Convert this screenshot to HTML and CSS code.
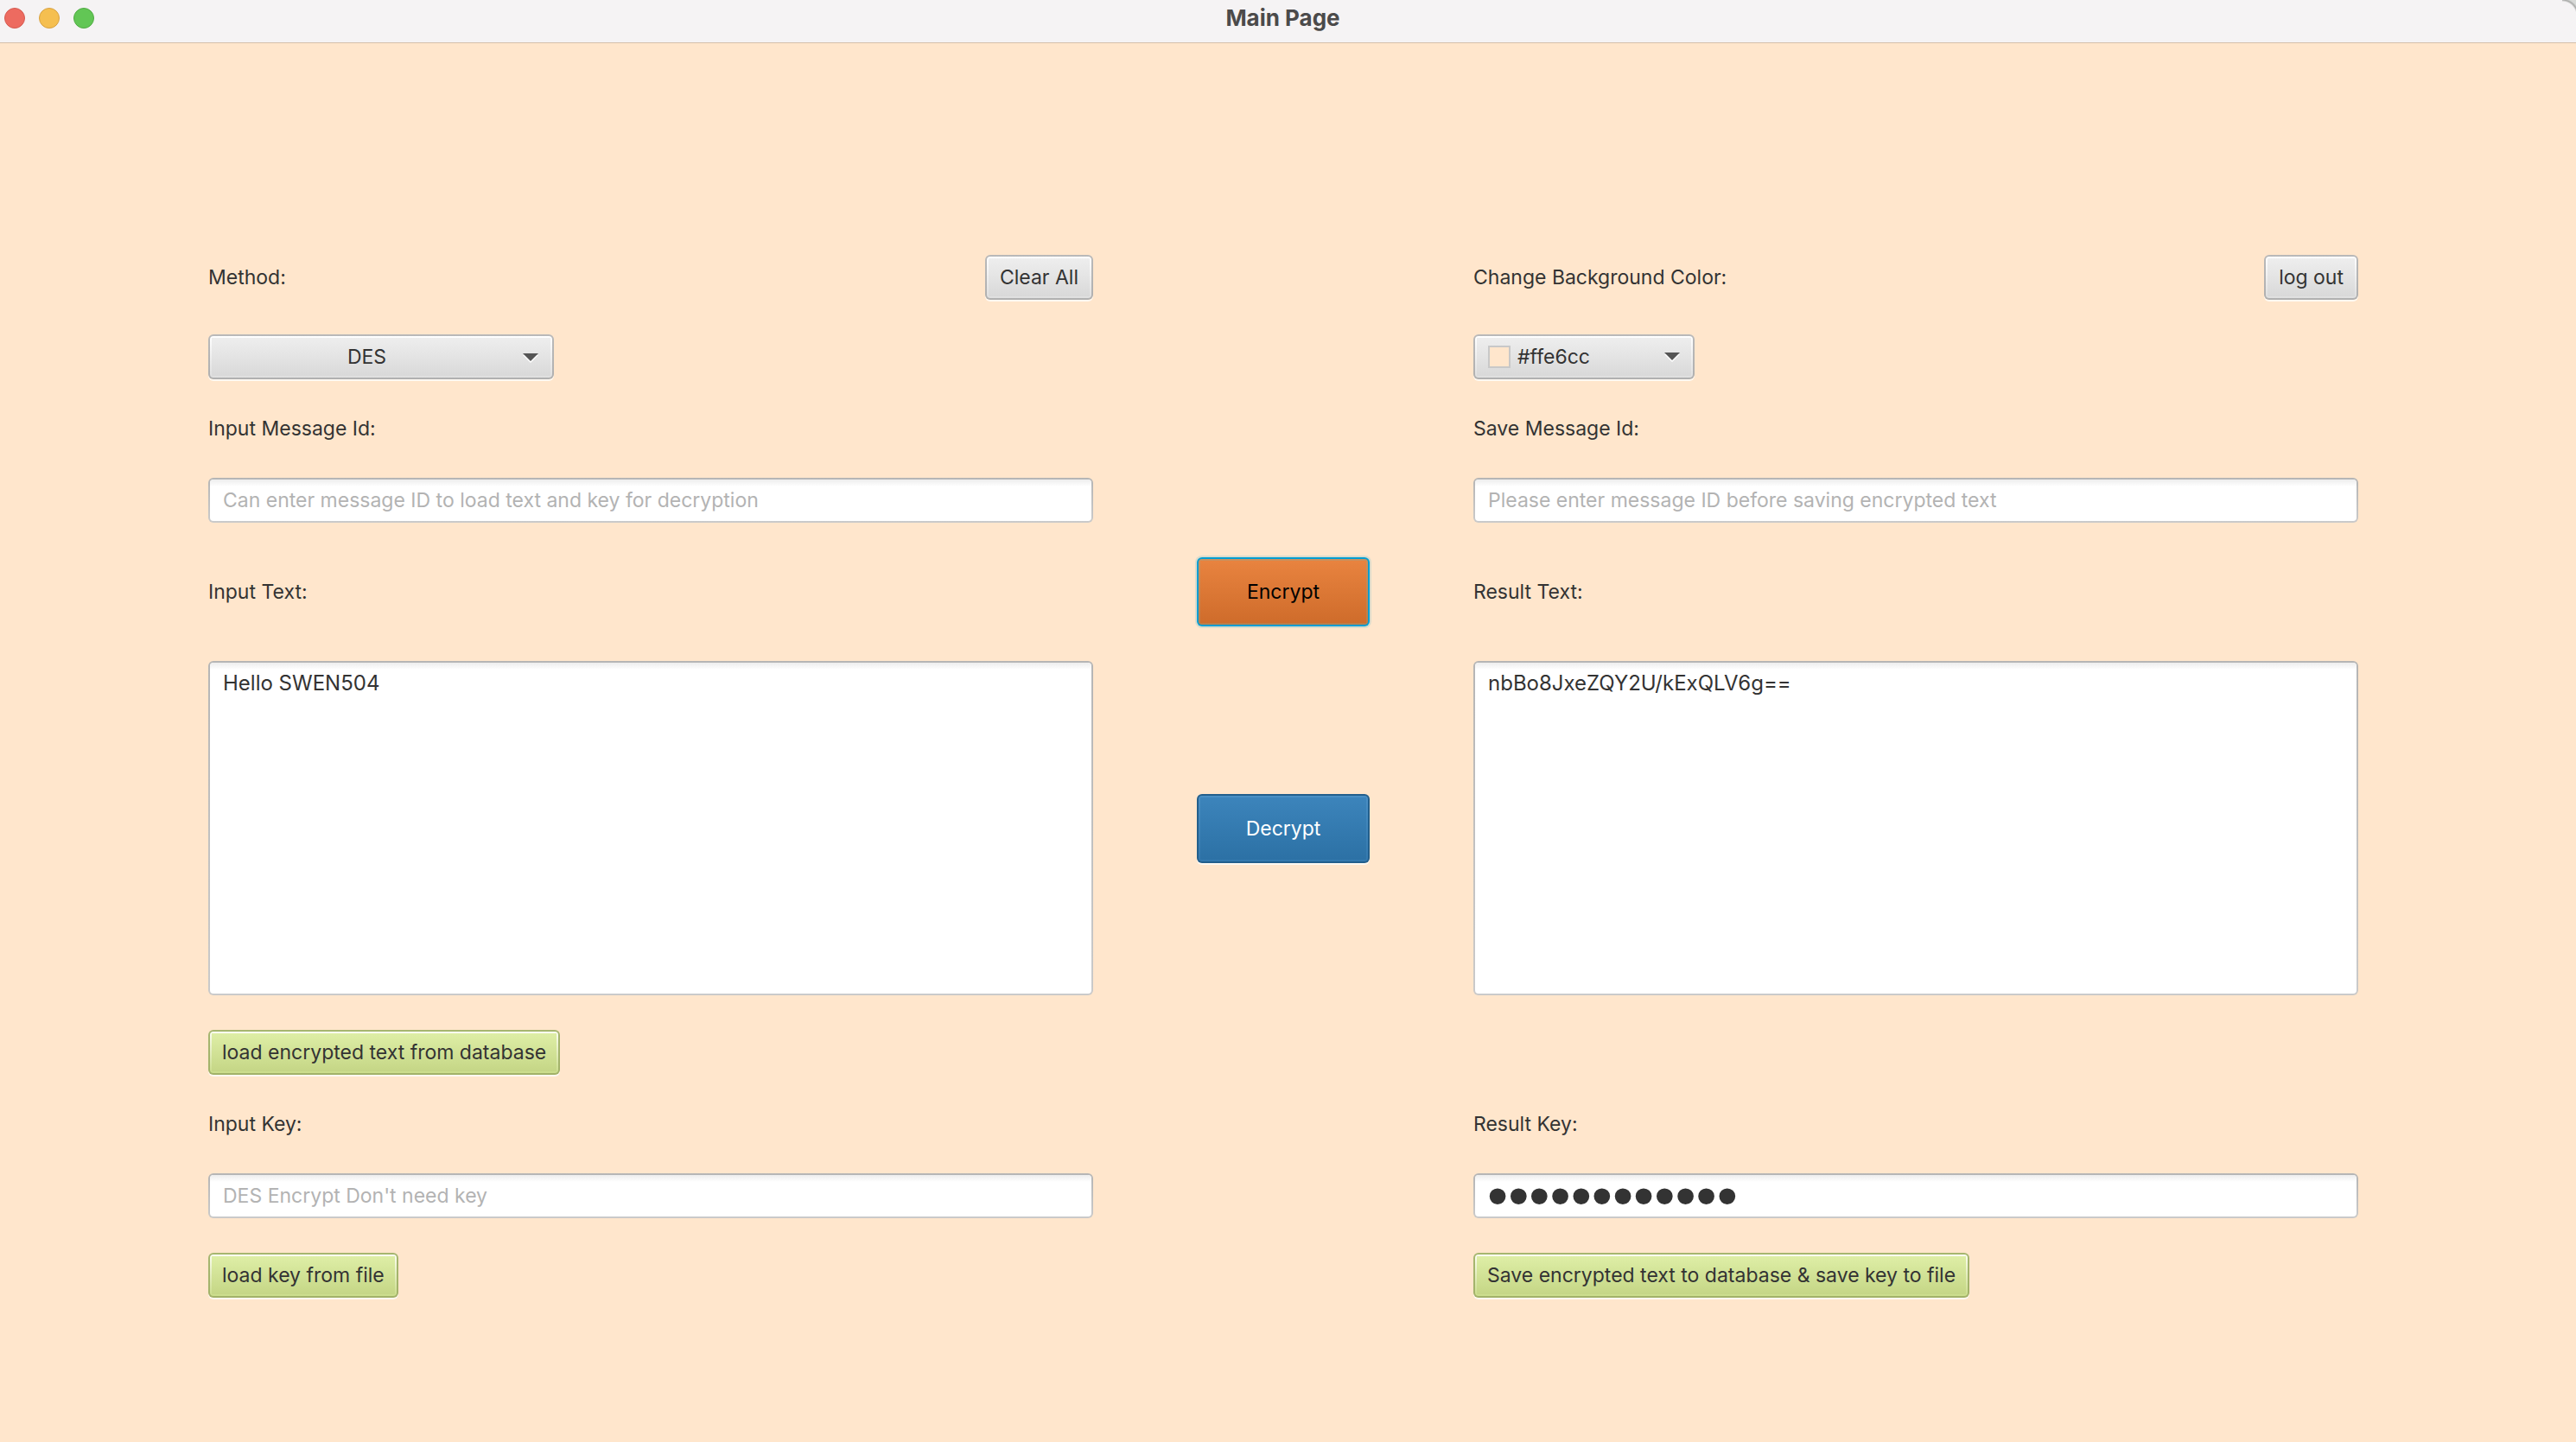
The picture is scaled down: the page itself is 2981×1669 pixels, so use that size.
FILE: index.html
```
<!DOCTYPE html>
<html lang="en">
<head>
<meta charset="utf-8">
<title>Main Page</title>
<link rel="stylesheet" href="styles.css">
</head>
<body>
<header class="titlebar">
  <div class="lights">
    <button class="light light-close" type="button" aria-label="Close"></button>
    <button class="light light-min" type="button" aria-label="Minimize"></button>
    <button class="light light-zoom" type="button" aria-label="Zoom"></button>
  </div>
  <h1 class="title">Main Page</h1>
</header>
<main class="form">
  <div class="row left">
    <label for="method">Method:</label>
    <button class="btn" type="button">Clear All</button>
  </div>
  <div class="row right">
    <span id="color-label">Change Background Color:</span>
    <button class="btn" type="button">log out</button>
  </div>

  <div class="method left">
    <select class="btn select" id="method">
      <option>DES</option>
    </select>
    <svg class="arrow method-arrow" viewBox="0 0 18 11" aria-hidden="true"><path d="M0 2h18l-9 9z" fill="#fff"/><path d="M0 0h18l-9 9z" fill="#555"/></svg>
  </div>
  <button class="btn picker right" type="button" aria-labelledby="color-label color-value">
    <span class="swatch"></span>
    <span id="color-value">#ffe6cc</span>
    <svg class="arrow" viewBox="0 0 18 11" aria-hidden="true"><path d="M0 2h18l-9 9z" fill="#fff"/><path d="M0 0h18l-9 9z" fill="#555"/></svg>
  </button>

  <label class="left" for="input-id">Input Message Id:</label>
  <label class="right" for="save-id">Save Message Id:</label>

  <input class="field left" id="input-id" type="text" placeholder="Can enter message ID to load text and key for decryption">
  <input class="field right" id="save-id" type="text" placeholder="Please enter message ID before saving encrypted text">

  <label class="left" for="input-text">Input Text:</label>
  <button class="btn action encrypt center" type="button">Encrypt</button>
  <label class="right" for="result-text">Result Text:</label>

  <textarea class="field area left" id="input-text">Hello SWEN504</textarea>
  <button class="btn action decrypt center" type="button">Decrypt</button>
  <textarea class="field area right" id="result-text">nbBo8JxeZQY2U/kExQLV6g==</textarea>

  <button class="btn green left" type="button">load encrypted text from database</button>

  <label class="left" for="input-key">Input Key:</label>
  <label class="right" for="result-key">Result Key:</label>

  <input class="field left" id="input-key" type="text" placeholder="DES Encrypt Don't need key">
  <input class="field secret right" id="result-key" type="password" value="a1b2c3d4e5f6">

  <button class="btn green left" type="button">load key from file</button>
  <button class="btn green right" type="button">Save encrypted text to database &amp; save key to file</button>
</main>
</body>
</html>
```
FILE: styles.css
```
* {
  box-sizing: border-box;
}

body {
  margin: 0;
  min-height: 100vh;
  display: flex;
  flex-direction: column;
  background: #ffe6cc;
  color: #333;
  font-family: "Inter", "Liberation Sans", sans-serif;
  font-size: 23px;
  line-height: 34px;
}

button,
input,
select,
textarea {
  margin: 0;
  color: inherit;
  font: inherit;
}

/* Window title bar, with the desktop showing past its rounded corner */
.titlebar {
  display: grid;
  grid-template-columns: 1fr auto 1fr;
  align-items: center;
  padding: 0 17px 8px 5px;
  height: 50px;
  background:
    radial-gradient(circle at 0 100%, #f5f3f4 16px, #a9aaa8 18px, #d8dad8 20px) top right / 16px 18px no-repeat,
    #f5f3f4;
  border-bottom: 1px solid #d5bfab;
}

.lights {
  display: flex;
  gap: 16px;
}

.light {
  width: 24px;
  height: 24px;
  padding: 0;
  border: 1px solid;
  border-radius: 50%;
}

.light-close {
  background: #ed6b60;
  border-color: #d55a50;
}

.light-min {
  background: #f5bf50;
  border-color: #d8a141;
}

.light-zoom {
  background: #62c655;
  border-color: #50ab43;
}

.title {
  margin: 0;
  font-size: 26px;
  font-weight: 700;
  line-height: 34px;
  color: #4b4a4a;
}

/* Three-column form */
.form {
  flex: 1;
  display: grid;
  grid-template-columns: 1fr 200px 1fr;
  grid-template-rows: 52px 52px 34px 52px 80px 1fr 52px 34px 52px 52px;
  gap: 40px 120px;
  align-items: center;
  justify-items: start;
  padding: 245px 252px 167px 241px;
}

.left {
  grid-column: 1;
}

.center {
  grid-column: 2;
}

.right {
  grid-column: 3;
}

.row {
  width: 100%;
  display: flex;
  align-items: center;
  justify-content: space-between;
}

/* Buttons */
.btn {
  --edge: linear-gradient(#b9b9b9, #b0b0b0);
  --rim: linear-gradient(#fff, #dfdfdf);
  --face: linear-gradient(#eee, #d9d9d9);
  height: 52px;
  padding: 0 15px;
  border: 2px solid transparent;
  border-radius: 6px;
  background:
    var(--face) center / calc(100% - 4px) calc(100% - 4px) no-repeat padding-box,
    var(--rim) padding-box,
    var(--edge) border-box;
  box-shadow: 0 2px 0 rgba(255, 255, 255, 0.75);
  white-space: nowrap;
}

.green {
  --edge: linear-gradient(#a6b670, #a2b269);
  --rim: linear-gradient(#fbfdf2, #cbdd8b);
  --face: linear-gradient(#deeea6, #c5d686);
  padding: 0 14px;
}

.action {
  width: 100%;
  height: 80px;
}

.encrypt {
  --edge: linear-gradient(#039ed3, #039ed3);
  --rim: linear-gradient(#c9915f, #bd7d48);
  --face: linear-gradient(#e8833f, #cf6c2b);
  color: #000;
  box-shadow: 0 0 0 2px rgba(3, 158, 211, 0.15);
}

.decrypt {
  --edge: linear-gradient(#235f8c, #235f8c);
  --rim: linear-gradient(#4a8fc4, #3479ae);
  --face: linear-gradient(#3c84bb, #2c71a5);
  color: #fff;
}

.method {
  position: relative;
  width: 400px;
}

.select {
  display: block;
  appearance: none;
  width: 100%;
  padding-right: 48px;
  text-align: center;
  text-align-last: center;
}

.arrow {
  width: 18px;
  height: 11px;
}

.method-arrow {
  position: absolute;
  top: 22px;
  right: 18px;
  pointer-events: none;
}

.picker {
  display: flex;
  align-items: center;
  gap: 8px;
  width: 256px;
}

.picker .arrow {
  margin-left: auto;
}

.swatch {
  width: 26px;
  height: 26px;
  border: 2px solid #c8c8c8;
  background: #ffe6cc;
}

/* Text fields */
.field {
  width: 100%;
  height: 52px;
  padding: 0 15px;
  border: 2px solid transparent;
  border-radius: 6px;
  outline: 0;
  background:
    linear-gradient(#ededed, #fff) top / 100% 8px no-repeat padding-box,
    linear-gradient(#fff, #fff) padding-box,
    linear-gradient(#b5b5b5, #cacaca) border-box;
}

.field::placeholder {
  color: #b3b3b3;
  opacity: 1;
}

.area {
  display: block;
  height: 100%;
  padding-top: 7px;
  font-size: 24px;
  resize: none;
}

/* Large bullets fill the height of the key field */
.secret {
  padding: 0 14px 2px;
  font-family: "Liberation Sans", sans-serif;
  font-size: 69px;
  line-height: 46px;
}
```
